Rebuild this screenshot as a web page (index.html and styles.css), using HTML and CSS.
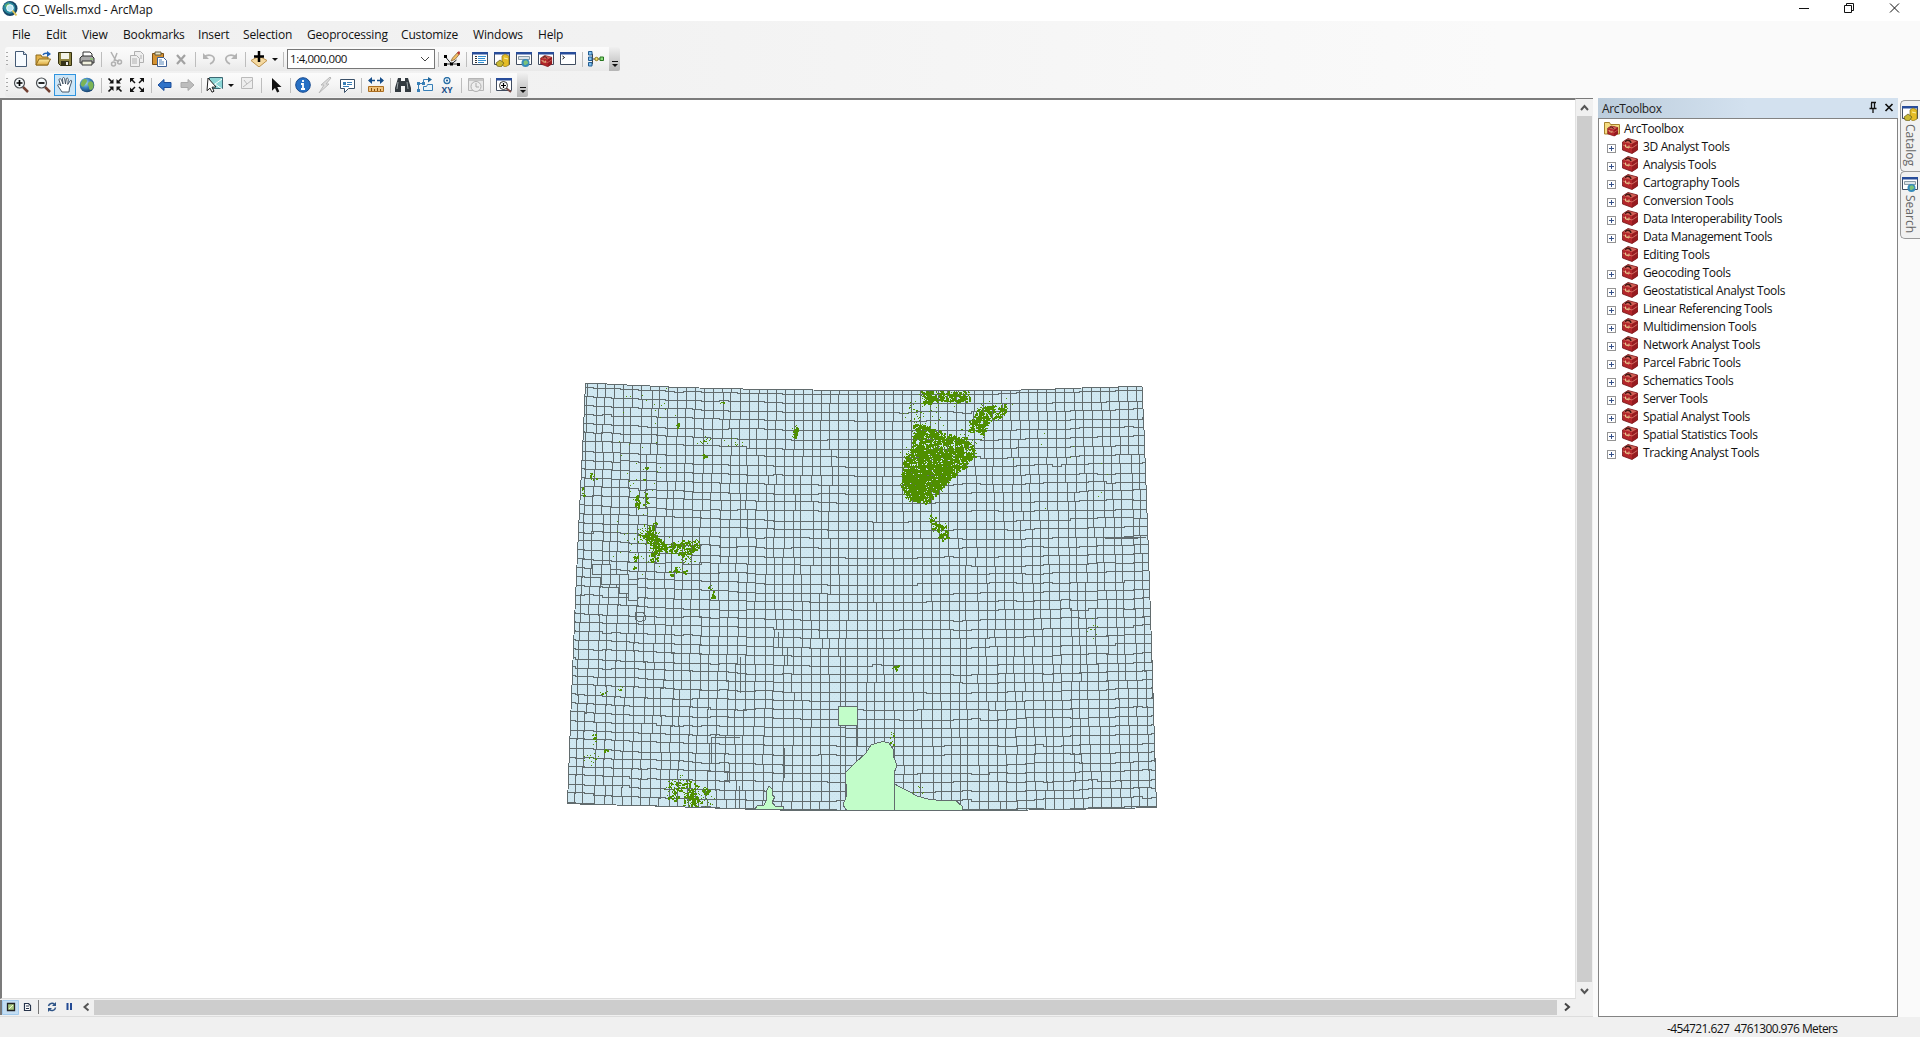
FILE: index.html
```html
<!DOCTYPE html>
<html lang="en">
<head>
<meta charset="utf-8">
<title>CO_Wells.mxd - ArcMap</title>
<link rel="stylesheet" href="styles.css">
</head>
<body>
<svg class="defs" width="0" height="0">
<defs>
<linearGradient id="gold" x1="0" y1="0" x2="0" y2="1"><stop offset="0" stop-color="#fff0a8"/><stop offset="1" stop-color="#dba63c"/></linearGradient>
<radialGradient id="sphere" cx=".4" cy=".35" r=".7"><stop offset="0" stop-color="#a8dcf5"/><stop offset=".5" stop-color="#3c83bd"/><stop offset="1" stop-color="#123963"/></radialGradient>
<pattern id="land" width="4" height="4" patternUnits="userSpaceOnUse"><rect width="4" height="4" fill="#d0e8f1"/><path d="M0 0h1v1H0zM2 2h1v1H2z" fill="#c9e3ee"/></pattern>
<symbol id="globe" viewBox="0 0 16 16"><circle cx="8" cy="8" r="7.3" fill="url(#sphere)"/><path d="M3 4c2-3 5-2 5 0S6 7 5 9 2 9 1.500 7zM10 5c2-2 4 0 4.500 2 .5 3-1 6-3 6s-1-3-2-4-1-3 .5-4z" fill="#7cb455"/></symbol>
<symbol id="app" viewBox="0 0 16 16"><circle cx="8" cy="7.500" r="7.500" fill="#164768"/><path d="M2 4c3-4 6-3 8-2s4 4 3 7-5 5-8 3-5-5-3-8z" fill="#2b8ba0"/><path d="M3 4l4-2 1 3-3 4z" fill="#69b36a"/><circle cx="8" cy="7" r="3.300" fill="#b7e4f2" stroke="#f2fbff"/><path d="M10.500 9.500l4 5" stroke="#e0c65c" stroke-width="2"/></symbol>
<symbol id="new" viewBox="0 0 16 16"><path d="M2.500.5h8l3 3v12h-11z" fill="#f7fbff" stroke="#445a75"/><path d="M10.500.5v3h3" fill="#cfdcec" stroke="#445a75"/></symbol>
<symbol id="open" viewBox="0 0 16 16"><path d="M1 14V4h5l1 2h6v8z" fill="#e3b24b" stroke="#8e6a1d"/><path d="M1 14l3-6h11.500l-3 6z" fill="url(#gold)" stroke="#8e6a1d"/><path d="M8 4c1-2 3-2 5-1.500" fill="none" stroke="#2062b4" stroke-width="1.500"/><path d="M12 0l4 3-4 3z" fill="#2062b4"/></symbol>
<symbol id="save" viewBox="0 0 16 16"><path d="M1.500 1.500h13v13h-11l-2-2z" fill="#8d8341" stroke="#33300f"/><path d="M4 2h8v6H4z" fill="#f3f3e8"/><path d="M4 10h8v4H4z" fill="#35321a"/><path d="M9 11h2v3H9z" fill="#eee"/></symbol>
<symbol id="print" viewBox="0 0 16 16"><path d="M4 7V1h7l2 2v4" fill="#fff" stroke="#333"/><path d="M1 7l2-2h10l2 2v5H1z" fill="#a9a9a9" stroke="#333"/><path d="M3 10h10v4H3z" fill="#f1f1de" stroke="#333"/><path d="M11 8h3" stroke="#7ad353"/></symbol>
<symbol id="cut" viewBox="0 0 16 16"><g fill="none" stroke="#b1b1b1" stroke-width="1.500"><path d="M4 1l5 9M10 2L7 10M9 9l3 2"/><circle cx="12.500" cy="11" r="2"/><circle cx="6.500" cy="13" r="2"/></g></symbol>
<symbol id="copy" viewBox="0 0 16 16"><g fill="#efefef" stroke="#b0b0b0"><path d="M5.500.5h6l3 3v8h-9z"/><path d="M1.500 4.500h6l3 3v8h-9z"/><path d="M3 8h5M3 10h5M3 12h5M11 5h2M11 7h2"/></g></symbol>
<symbol id="paste" viewBox="0 0 16 16"><path d="M1.500 2.500h11v11h-11z" fill="#d59332" stroke="#7b4e13"/><path d="M4 1h6v3H4z" fill="#e9e5c7" stroke="#665b38"/><path d="M6.500 6.500h6l3 3v6h-9z" fill="#fff" stroke="#3d5f94"/><path d="M8 9h3M8 11h5M8 13h5" stroke="#5686ba"/></symbol>
<symbol id="del" viewBox="0 0 16 16"><path d="M4 4l8 9M12 4l-8 9" stroke="#a2a2a2" stroke-width="2.200"/></symbol>
<symbol id="undo" viewBox="0 0 16 16"><path d="M3 6c5-4 11-1 10 3-.5 2-2 3-4 4" fill="none" stroke="#b3b3b3" stroke-width="1.700"/><path d="M2 2v6h6z" fill="#b3b3b3"/></symbol>
<symbol id="add" viewBox="0 0 18 16"><path d="M1 9.500L9 5l8 4.500L9 16z" fill="#f5d9a0" stroke="#bd924d"/><path d="M9 0v11M4 5.500h10" stroke="#000" stroke-width="2.500"/></symbol>
<symbol id="sketch" viewBox="0 0 16 16"><path d="M1.500 6l6 7h7M1.500 13h6l5-4" fill="none" stroke="#222"/><path d="M0 4h3v3H0zM0 12h3v3H0zM6 11.500h3v3H6zM13 12h3v3h-3z" fill="#000"/><path d="M7 10l1.500-3L14 1l2 1.500-5 6z" fill="#f2bd62" stroke="#76592f" stroke-width=".7"/><path d="M13 2l2-2 1 1.500L15 4z" fill="#bb3838"/></symbol>
<symbol id="win" viewBox="0 0 16 16"><path d="M.5 2.500h15v11H.5z" fill="#fff" stroke="#414d60"/><path d="M0 1h16v2.500H0z" fill="#284d9a"/></symbol>
<symbol id="table" viewBox="0 0 16 16"><use href="#win"/><path d="M3 5.500h2M3 7.500h2M3 9.500h2M3 11.500h2" stroke="#333"/><path d="M6 5.500h8M6 7.500h7M6 9.500h8M6 11.500h6" stroke="#338ed0"/></symbol>
<symbol id="catalog" viewBox="0 0 16 16"><use href="#win"/><path d="M8 5l3-2 4 2v9l-4 2-3-2z" fill="#e5bd26" stroke="#8a741b" stroke-width=".7"/><path d="M2 12l4-3 4 3-3 4-4-1z" fill="#c9b832" stroke="#625817" stroke-width=".7"/><path d="M10 7l4 1" stroke="#fff2a1"/></symbol>
<symbol id="search" viewBox="0 0 16 16"><use href="#win"/><path d="M2.500 5.500h11v3h-11z" fill="#dde4e8" stroke="#8b9ba5"/><circle cx="9.500" cy="12" r="4" fill="#368bba"/><path d="M8 10c3-2 3 0 4 1s-2 3-3 3-2-2-1-4z" fill="#7cc379"/></symbol>
<symbol id="box" viewBox="0 0 16 16"><path d="M.5 4L6 .5l9.500 2.500v9L10 15.500.5 12z" fill="#b3262a" stroke="#701518" stroke-width=".8"/><path d="M1 4l5-3 9 2.300L10 6z" fill="#cf5f55"/><path d="M10 6l5.500-3v9L10 15.500z" fill="#961b1f"/><path d="M.8 7l9.200 3 5.300-3.500" fill="none" stroke="#e08072" stroke-width=".8"/><path d="M3.500 4C3.500 1.500 8.500 1.500 9 5" fill="none" stroke="#3d1712" stroke-width="1.300"/><path d="M3.500 6.500v2.500l3.500 1V7.500" fill="none" stroke="#e4c98a"/></symbol>
<symbol id="toolbox" viewBox="0 0 16 16"><use href="#win"/><use href="#box" x="2" y="4" width="12.500" height="12"/></symbol>
<symbol id="python" viewBox="0 0 16 16"><use href="#win"/><path d="M2.500 5l2 1.500-2 1.500" fill="none" stroke="#111"/></symbol>
<symbol id="model" viewBox="0 0 16 16"><path d="M3 3h1.500v10H3M4.500 8H15" fill="none" stroke="#444"/><g stroke="#235c91" fill="#7fc0f0"><path d="M.5.500h3.500v3.500H.5zM.5 6h3.500v3.500H.5zM.5 11.500h3.500V15H.5z"/><circle cx="8.500" cy="8" r="1.700" fill="#f0e36c" stroke="#91761f"/><path d="M12 6h3.500v3.500H12z" fill="#8ddc7d" stroke="#26751f"/></g></symbol>
<symbol id="zin" viewBox="0 0 16 16"><path d="M10 10l5 5" stroke="#713f31" stroke-width="2.500"/><circle cx="6.500" cy="6" r="5" fill="#f5fafc" stroke="#4a4e52" stroke-width="1.200"/><path d="M6.500 3v6M3.500 6h6" stroke="#000" stroke-width="1.700"/></symbol>
<symbol id="zout" viewBox="0 0 16 16"><path d="M10 10l5 5" stroke="#713f31" stroke-width="2.500"/><circle cx="6.500" cy="6" r="5" fill="#f5fafc" stroke="#4a4e52" stroke-width="1.200"/><path d="M3.500 6h6" stroke="#000" stroke-width="1.700"/></symbol>
<symbol id="hand" viewBox="0 0 16 16"><path d="M5 15L1 9c-1-2 1-2 2-1l1 1-2-6c0-2 2-1.500 2.500 0L6 7 5.500 2c0-2 2-2 2.200 0L8.500 7l.8-5c.4-1.500 2-1 2 .5l-.6 5L13 4c1-1.500 2-.5 1.500 1l-2 6-.5 4z" fill="#fff" stroke="#38485a" stroke-width=".9"/></symbol>
<symbol id="shrink" viewBox="0 0 16 16"><path d="M1.500 1.500l4 4M14.500 1.500l-4 4M1.500 14.500l4-4M14.500 14.500l-4-4" stroke="#111" stroke-width="1.700"/><path d="M6.500 2v4.500H2zM9.500 2v4.500H14zM6.500 14V9.500H2zM9.500 14V9.500H14z" fill="#111"/></symbol>
<symbol id="grow" viewBox="0 0 16 16"><path d="M2 2l4 4M14 2l-4 4M2 14l4-4M14 14l-4-4" stroke="#111" stroke-width="1.500"/><path d="M1 5.500V1h4.500zM15 5.500V1h-4.500zM1 10.500V15h4.500zM15 10.500V15h-4.500z" fill="#111"/></symbol>
<symbol id="back" viewBox="0 0 16 16"><path d="M1 8l6-5.500V5.500h7v5H7v3z" fill="#2f72c8" stroke="#1b4c99"/></symbol>
<symbol id="fwd" viewBox="0 0 16 16"><path d="M15 8L9 2.500V5.500H2v5h7v3z" fill="#bdbdbd" stroke="#aaa"/></symbol>
<symbol id="select" viewBox="0 0 18 16"><path d="M3.500.5h13v11h-13z" fill="#8bd5d5" stroke="#3c6873"/><path d="M4 10l5-3 7 5M9 7l7-5" stroke="#fff" fill="none"/><path d="M2 1l8 9-4 .2 2 4-2 1-2-4-3 2.500z" fill="#fff" stroke="#222"/></symbol>
<symbol id="clear" viewBox="0 0 16 16"><path d="M2.500.5h11v11h-11zM5 3l3 4-4 3M8 7l5-4" fill="#eee" stroke="#bababa"/></symbol>
<symbol id="pointer" viewBox="0 0 16 16"><path d="M4 1l9.500 9H9.300l2 4.400-2.200 1L7 10.900 4 13.800z" fill="#111"/></symbol>
<symbol id="info" viewBox="0 0 16 16"><circle cx="8" cy="8" r="7.300" fill="#2770c4" stroke="#184a8f"/><path d="M8 3v2M6 7h2v5M6 12h4" fill="none" stroke="#fff" stroke-width="1.800"/></symbol>
<symbol id="bolt" viewBox="0 0 16 16"><path d="M13 0L4 8h3l-5 8 10-9H9l5-6z" fill="#ddd" stroke="#b9b9b9"/></symbol>
<symbol id="popup" viewBox="0 0 16 16"><path d="M1.500 2.500h14v9h-6l-4 4v-4h-4z" fill="#fff" stroke="#3a5068"/><path d="M4 5h3v3H4z" fill="#397eb6"/><path d="M8 5.500h5M8 7.500h5M4 9.500h6" stroke="#397eb6"/></symbol>
<symbol id="measure" viewBox="0 0 16 16"><path d="M1 3.500h14" stroke="#174e8a" stroke-width="1.500"/><path d="M0 3.500L4 0v7zM16 3.500L12 0v7z" fill="#174e8a"/><path d="M7 2h2v3H7z" fill="#fff"/><path d="M.5 9.500h15v5H.5z" fill="#f0c27b" stroke="#ad6f22"/><path d="M3.500 11v3M6.500 12v2M9.500 11v3M12.500 12v2" stroke="#865011"/></symbol>
<symbol id="find" viewBox="0 0 16 16"><path d="M3 1h3v3h4V1h3l3 10v4h-6V9H6v6H0v-4z" fill="#333a40"/><path d="M3 5l-1 7M12 5l1 7" stroke="#9ba4a7"/></symbol>
<symbol id="route" viewBox="0 0 16 16"><path d="M1.500 13.500v-7h5v-4h6" fill="none" stroke="#377eb6"/><path d="M11 0l4 2.500-4 3z" fill="#216699"/><path d="M0 5h3v3H0zM0 12h3v3H0zM5 5h3v3H5z" fill="#377eb6"/><path d="M6.500 9.500h3l1-2h5v6h-9z" fill="#eaf5fa" stroke="#377eb6"/></symbol>
<symbol id="xy" viewBox="0 0 16 16"><circle cx="8" cy="3.500" r="3" fill="#eaf5fa" stroke="#286da5" stroke-width="1.300"/><circle cx="8" cy="3.500" r="1" fill="#174e8a"/><text x="8" y="16" text-anchor="middle" class="xy-label">XY</text></symbol>
<symbol id="time" viewBox="0 0 16 16"><path d="M.5 1.500h15v12H.5z" fill="#e9e9e9" stroke="#b5b5b5"/><path d="M1 3h14" stroke="#c7c7c7" stroke-width="2"/><circle cx="8" cy="9.500" r="5" fill="#eee" stroke="#b0b0b0"/><path d="M8 6v4h3" fill="none" stroke="#aaa"/></symbol>
<symbol id="viewer" viewBox="0 0 16 16"><use href="#win"/><path d="M10 11l5 4" stroke="#7c4b46" stroke-width="2"/><circle cx="7.500" cy="8.500" r="4" fill="#fff" stroke="#333"/><path d="M7.500 6v5M5 8.500h5" stroke="#000" stroke-width="1.200"/></symbol>
<symbol id="folderbox" viewBox="0 0 16 16"><path d="M.5 13V1.500h5l1 2h9V13z" fill="#f5dc82" stroke="#a6812d"/><use href="#box" x="3" y="4.500" width="11.500" height="11"/></symbol>
</defs>
</svg>

<header class="titlebar">
  <svg class="app-icon"><use href="#app"/></svg>
  <span class="title">CO_Wells.mxd - ArcMap</span>
  <svg class="winbtns" width="130" height="21" viewBox="0 0 130 21"><path d="M9 8.500h10M54.500 5.500h7v7h-7zM56.500 5v-1.500h7v7H62M100 3.500l9 9M109 3.500l-9 9" fill="none" stroke="#111"/></svg>
</header>

<section class="chrome">
  <nav class="menu"><span>File</span><span>Edit</span><span>View</span><span>Bookmarks</span><span>Insert</span><span>Selection</span><span>Geoprocessing</span><span>Customize</span><span>Windows</span><span>Help</span></nav>
  <div class="toolbar main">
    <i class="grip"></i>
    <b><svg><use href="#new"/></svg></b><b><svg><use href="#open"/></svg></b><b><svg><use href="#save"/></svg></b><b><svg><use href="#print"/></svg></b><i class="sep"></i>
    <b><svg><use href="#cut"/></svg></b><b><svg><use href="#copy"/></svg></b><b><svg><use href="#paste"/></svg></b><b><svg><use href="#del"/></svg></b><i class="sep"></i>
    <b><svg><use href="#undo"/></svg></b><b><svg class="flip"><use href="#undo"/></svg></b><i class="sep"></i>
    <b><svg class="wide"><use href="#add"/></svg></b><i class="caret"></i><i class="sep"></i>
    <div class="combo"><span>1:4,000,000</span><svg class="chev" viewBox="0 0 10 6"><path d="M1 1l4 4 4-4" fill="none" stroke="#444"/></svg></div><i class="sep"></i>
    <b><svg><use href="#sketch"/></svg></b><i class="sep"></i>
    <b><svg><use href="#table"/></svg></b><b><svg><use href="#catalog"/></svg></b><b><svg><use href="#search"/></svg></b><b><svg><use href="#toolbox"/></svg></b><b><svg><use href="#python"/></svg></b><i class="sep"></i>
    <b><svg><use href="#model"/></svg></b><i class="cap"></i>
  </div>
  <div class="toolbar tools">
    <i class="grip"></i>
    <b><svg><use href="#zin"/></svg></b><b><svg><use href="#zout"/></svg></b><b class="active"><svg><use href="#hand"/></svg></b><b><svg><use href="#globe"/></svg></b><i class="sep"></i>
    <b><svg><use href="#shrink"/></svg></b><b><svg><use href="#grow"/></svg></b><i class="sep"></i>
    <b><svg><use href="#back"/></svg></b><b><svg><use href="#fwd"/></svg></b><i class="sep"></i>
    <b><svg class="wide"><use href="#select"/></svg></b><i class="caret"></i><b><svg><use href="#clear"/></svg></b><i class="sep w7"></i>
    <b><svg><use href="#pointer"/></svg></b><i class="sep w5"></i>
    <b><svg><use href="#info"/></svg></b><b><svg><use href="#bolt"/></svg></b><b><svg><use href="#popup"/></svg></b><i class="sep w7"></i>
    <b><svg><use href="#measure"/></svg></b><i class="sep w5"></i>
    <b><svg><use href="#find"/></svg></b><b><svg><use href="#route"/></svg></b><b><svg><use href="#xy"/></svg></b><i class="sep w7"></i>
    <b><svg><use href="#time"/></svg></b><i class="sep"></i>
    <b><svg><use href="#viewer"/></svg></b><i class="cap"></i>
  </div>
</section>

<main class="work">
  <section class="mapwin">
    <div class="canvas"><svg id="map" width="1573" height="898" viewBox="2 100 1573 898" shape-rendering="crispEdges"></svg></div>
    <div class="vscroll"><svg viewBox="0 0 15 17"><path d="M4 11l3.500-4 3.500 4" fill="none" stroke="#555" stroke-width="2"/></svg><div class="thumb"></div><svg viewBox="0 0 15 17"><path d="M4 7l3.500 4 3.500-4" fill="none" stroke="#555" stroke-width="2"/></svg></div>
    <div class="hscroll">
      <svg width="94" height="15" viewBox="0 0 94 15"><path d="M0 0h2v15H0z" fill="#7a7a7a"/><path d="M2.500.5h16v14h-16z" fill="#c3ddf3" stroke="#a3cbed"/><path d="M7.500 3.500h7v7h-7z" fill="#a9cb83" stroke="#222" stroke-width="1.300"/><path d="M9 9l4-4" stroke="#eff7d6"/><path d="M24.500 3.500h4l2 2v5h-6z" fill="#fff" stroke="#26334a" stroke-width="1.200"/><path d="M26 6h3M26 8.500h3" stroke="#26334a"/><path d="M38.500 0v14" stroke="#777"/><path d="M48.500 6a3.500 3.500 0 0 1 6-1.500M55.500 7.500a3.500 3.500 0 0 1-6 2" fill="none" stroke="#2d5386" stroke-width="1.500"/><path d="M56 2v4h-4zM48 12V8h4z" fill="#2d5386"/><path d="M67.500 3v7M71 3v7" stroke="#234a94" stroke-width="2"/><path d="M88.500 3.500l-4 3.500 4 3.500" fill="none" stroke="#555" stroke-width="2"/></svg>
      <div class="thumb"></div>
      <svg width="35" height="15" viewBox="0 0 35 15"><path d="M8 3.500L12 7l-4 3.500" fill="none" stroke="#444" stroke-width="2"/></svg>
    </div>
  </section>
  <aside class="panel">
    <div class="panel-head"><span>ArcToolbox</span><svg width="44" height="20" viewBox="0 0 44 20"><path d="M17 4.500h5M17.500 5v5M20.500 5v5M15.500 10.500h7M19 11v4" fill="none" stroke="#111" stroke-width="1.300"/><path d="M31.500 6l7 7M38.500 6l-7 7" stroke="#111" stroke-width="1.700"/></svg></div>
    <div class="tree">
      <div class="root"><svg><use href="#folderbox"/></svg><span>ArcToolbox</span></div>
      <div class="node"><i class="plus"></i><svg><use href="#box"/></svg><span>3D Analyst Tools</span></div>
      <div class="node"><i class="plus"></i><svg><use href="#box"/></svg><span>Analysis Tools</span></div>
      <div class="node"><i class="plus"></i><svg><use href="#box"/></svg><span>Cartography Tools</span></div>
      <div class="node"><i class="plus"></i><svg><use href="#box"/></svg><span>Conversion Tools</span></div>
      <div class="node"><i class="plus"></i><svg><use href="#box"/></svg><span>Data Interoperability Tools</span></div>
      <div class="node"><i class="plus"></i><svg><use href="#box"/></svg><span>Data Management Tools</span></div>
      <div class="node leaf"><i class="plus"></i><svg><use href="#box"/></svg><span>Editing Tools</span></div>
      <div class="node"><i class="plus"></i><svg><use href="#box"/></svg><span>Geocoding Tools</span></div>
      <div class="node"><i class="plus"></i><svg><use href="#box"/></svg><span>Geostatistical Analyst Tools</span></div>
      <div class="node"><i class="plus"></i><svg><use href="#box"/></svg><span>Linear Referencing Tools</span></div>
      <div class="node"><i class="plus"></i><svg><use href="#box"/></svg><span>Multidimension Tools</span></div>
      <div class="node"><i class="plus"></i><svg><use href="#box"/></svg><span>Network Analyst Tools</span></div>
      <div class="node"><i class="plus"></i><svg><use href="#box"/></svg><span>Parcel Fabric Tools</span></div>
      <div class="node"><i class="plus"></i><svg><use href="#box"/></svg><span>Schematics Tools</span></div>
      <div class="node"><i class="plus"></i><svg><use href="#box"/></svg><span>Server Tools</span></div>
      <div class="node"><i class="plus"></i><svg><use href="#box"/></svg><span>Spatial Analyst Tools</span></div>
      <div class="node"><i class="plus"></i><svg><use href="#box"/></svg><span>Spatial Statistics Tools</span></div>
      <div class="node"><i class="plus"></i><svg><use href="#box"/></svg><span>Tracking Analyst Tools</span></div>
    </div>
  </aside>
  <div class="tabs">
    <div class="tab cat"><svg><use href="#catalog"/></svg><span>Catalog</span></div>
    <div class="tab sea"><svg><use href="#search"/></svg><span>Search</span></div>
  </div>
</main>
<footer class="status"><span>-454721.627&nbsp; 4761300.976 Meters</span></footer>
<script src="map.js"></script>
</body>
</html>
```
FILE: styles.css
```css
* { box-sizing: border-box; }
body { margin: 0; width: 1920px; height: 1037px; overflow: hidden; background: #f0f0f0; color: #111; font: 12px/18px "Open Sans", "Noto Sans", sans-serif; letter-spacing: -0.35px; display: flex; flex-direction: column; }
.defs { position: absolute; }
svg { display: block; flex: none; }
span { white-space: nowrap; }

.titlebar { height: 21px; background: #fff; display: flex; align-items: flex-start; }
.app-icon { width: 16px; height: 16px; margin: 1px 5px 0 2px; }
.title { flex: 1; line-height: 19px; letter-spacing: -0.15px; }

.chrome { height: 77px; background: linear-gradient(90deg, #f0f0f0 0, #f2f2f2 620px, #fafafa 1500px); display: flex; flex-direction: column; }
.menu { height: 25px; padding-left: 12px; display: grid; grid-template-columns: 34px 36px 41px 75px 45px 64px 94px 72px 65px 40px; line-height: 27px; letter-spacing: -0.17px; }
.toolbar { display: flex; align-items: center; border-radius: 3px; background: linear-gradient(#fbfbfb, #f5f5f5 50%, #e9e9e9); margin-left: 5px; }
.main { height: 24px; width: 615px; margin-top: 1px; }
.tools { height: 24px; width: 523px; margin-top: 2px; }
.toolbar b { width: 22px; height: 22px; flex: none; display: flex; align-items: center; justify-content: center; }
.toolbar b svg { width: 16px; height: 16px; }
.toolbar b svg.wide { width: 18px; }
.toolbar b svg.flip { transform: scaleX(-1); }
.toolbar b.active { background: #cde6f7; border: 1px solid #2f94df; }
.grip { width: 5px; height: 15px; flex: none; background: repeating-linear-gradient(#aaa 0 1px, transparent 1px 4px) 1px 0 / 2px 100% no-repeat; }
.sep { width: 6px; height: 15px; flex: none; background: linear-gradient(#bdbdbd, #bdbdbd) 3px 0 / 1px 100% no-repeat; }
.sep.w7 { width: 7px; }
.sep.w5 { width: 5px; }
.caret { width: 10px; flex: none; display: flex; justify-content: center; }
.caret::before { content: ""; border: 3px solid transparent; border-top-color: #111; border-bottom: 0; }
.combo { width: 148px; height: 20px; margin-left: 1px; flex: none; border: 1px solid #777; background: #fff; display: flex; align-items: center; justify-content: space-between; padding: 0 4px 0 2px; font-size: 11.5px; line-height: 17px; letter-spacing: -0.42px; }
.combo span { margin-top: -2px; }
.chev { width: 10px; height: 6px; }
.cap { width: 11px; height: 24px; margin-left: 2px; flex: none; border-radius: 0 2px 2px 0; background: linear-gradient(#f0f0f0, #b5b5b5); display: flex; flex-direction: column; align-items: center; justify-content: flex-end; padding-bottom: 4px; gap: 2px; }
.cap::before { content: ""; width: 6px; height: 1px; background: #111; }
.cap::after { content: ""; border: 3px solid transparent; border-top-color: #111; border-bottom: 0; }

.work { height: 919px; display: flex; background: #fafafa; }
.mapwin { width: 1593px; display: grid; grid-template-columns: 1576px 17px; grid-template-rows: 901px 18px; background: #f0f0f0; }
.canvas { background: #fff; border-top: 2px solid #7b7b7b; border-left: 2px solid #7b7b7b; border-right: 1px solid #e2e2e2; border-bottom: 1px solid #ddd; overflow: hidden; }
.vscroll { display: flex; flex-direction: column; padding: 0 1px; border-top: 1px solid #7b7b7b; }
.vscroll svg { width: 15px; height: 17px; }
.vscroll .thumb { flex: 1; background: #cdcdcd; }
.hscroll { grid-column: 1 / 3; display: flex; border-bottom: 1px solid #ddd; padding-top: 1px; }
.hscroll .thumb { width: 1463px; height: 15px; background: #cdcdcd; }

.panel { width: 300px; margin-left: 5px; display: flex; flex-direction: column; }
.panel-head { height: 20px; background: linear-gradient(90deg, #bccddc, #d3e1ef 50%); display: flex; justify-content: space-between; padding-left: 4px; line-height: 21px; letter-spacing: -0.35px; color: #222; }
.tree { flex: 1; background: #fff; border: 1px solid #838383; padding: 1px 0 0 5px; }
.root, .node { height: 18px; display: flex; align-items: center; }
.root svg { width: 16px; height: 16px; margin-right: 4px; }
.node { padding-left: 3px; }
.node svg { width: 16px; height: 16px; margin: -2px 5px 0 6px; }
.plus { width: 9px; height: 9px; margin-top: 3px; flex: none; border: 1px solid #949494; background: linear-gradient(#34508a, #34508a) center / 5px 1px no-repeat, linear-gradient(#34508a, #34508a) center / 1px 5px no-repeat, #fff; }
.leaf .plus { visibility: hidden; }

.tabs { flex: 1; padding: 2px 0 0 2px; }
.tab { border: 1px solid #999; border-right: 0; border-radius: 5px 0 0 5px; background: #f1f1f1; color: #666; display: flex; flex-direction: column; align-items: center; padding-top: 4px; }
.tab svg { width: 16px; height: 16px; margin-right: 2px; }
.tab span { writing-mode: vertical-rl; line-height: 16px; margin: 3px 2px 0 0; letter-spacing: 0; }
.cat { height: 72px; }
.sea { height: 68px; margin-top: -1px; }

.status { height: 20px; background: #f0f0f0; padding-left: 1667px; line-height: 24px; letter-spacing: -0.6px; }
.xy-label { font: bold 8.5px "Open Sans", sans-serif; letter-spacing: 0; fill: #174e8a; }
```
FILE: map.js
```js
(function () {
  // Small seeded generator keeps the layer identical on every load.
  var seed = 20177;
  function rnd() {
    seed = (seed * 1664525 + 1013904223) % 4294967296;
    return seed / 4294967296;
  }
  function el(name, attrs, parent) {
    var e = document.createElementNS('http://www.w3.org/2000/svg', name);
    for (var k in attrs) e.setAttribute(k, attrs[k]);
    parent.appendChild(e);
    return e;
  }
  var map = document.getElementById('map');
  var GRID = '#626c6e', WELL = '#4f8f00', BARE = '#c2fdc9';

  function topY(x) {
    var t = (x - 880) / 295;
    return 390.3 - (x < 880 ? 7 : 4.8) * t * t;
  }
  var state = '585.5,383.5 600,383.5 614,384.5 640,385.5 678,387.5 720,388.5 765,389.5 860,390.5 1000,390.5 1042,389.5 1095,387.5 1142,386.5 1144,430 1148,540 1152,660 1156.500,807.500 1115,808.500 1000,810.500 800,810.500 760,809.500 700,807.500 640,805.500 592,804.500 567.5,803.500 571,710 575,610 579,520 583,440';
  var clip = el('clipPath', { id: 'outline' }, el('defs', {}, map));
  el('polygon', { points: state }, clip);
  el('polygon', { points: state, fill: 'url(#land)' }, map);
  var g = el('g', { 'clip-path': 'url(#outline)' }, map);

  // Township rows and ranges, stepped where survey lines are offset.
  var d = '', k, r, x, y;
  var rows = [];
  for (r = 0; r < 48; r++) {
    var line = {}, jog = 0;
    for (k = -34; k <= 34; k++) {
      var edge = Math.abs(k) > 9 ? 0.4 : 0.1;
      if (rnd() < edge * 0.6) jog = Math.round(rnd() * 2 - 1) * 0.8;
      line[k] = Math.round(topY(863 + k * 9) + 4 + r * 9.03 + jog);
    }
    rows.push(line);
    d += 'M' + (863 - 34 * 9) + ' ' + (line[-34] + 0.5);
    for (k = -33; k <= 34; k++) d += 'H' + (863 + k * 9 + 0.5) + 'V' + (line[k] + 0.5);
  }
  for (k = -33; k <= 33; k++) {
    var drift = 0;
    d += 'M' + (866 + k * 9 + 0.5) + ' 380';
    for (r = 0; r < 48; r++) {
      if (rnd() < (k < -2 ? 0.22 : k < 12 ? 0.06 : 0.18)) drift = Math.round(rnd() * 4 - 2) * (rnd() < 0.5 ? 1 : 0.5);
      x = Math.round(866 + k * 9 + k * (r * 0.009) + drift);
      d += 'H' + (x + 0.5) + 'V' + (rows[r][k] + 0.5);
    }
  }
  el('path', { d: d, fill: 'none', stroke: GRID }, g);
  el('path', { d: 'M1105 538.500l41-1M778.500 632v16M787.500 648v18M740.500 657v36M711 737.500h29M711.500 738v26M729.500 764V783M739.500 786v22M784 748v30M857.500 723v23', fill: 'none', stroke: GRID, 'stroke-width': 1.6 }, g);
  el('path', { d: 'M592 564h18v10h18v10h9v16h-9v-7h-9v-9h-18v-10h-9z', fill: 'url(#land)', stroke: GRID }, g);
  el('path', { d: 'M601.500 564v20M610.500 574v10M619.500 574v19M628.500 584v9M592 574h18M601 584h27M635 613l8-1 2 3v5l-6 2-4-3z', fill: 'none', stroke: GRID }, g);
  el('polygon', { points: state, fill: 'none', stroke: GRID }, map);

  [
    '838.500,706.500 857.500,706.500 857.500,725.500 838.500,725.500',
    '845,773 855,763 866,753 871,745 877,743 883,741.500 889,743 893,749 894,758 897,765 894.500,772 894.500,810.500 847,810.500 843,805 846,797 847,788 845,780',
    '894.500,784 902,788 910,792 917,796 930,799.500 947,801 955,800 962,806 963,810.500 894.500,810.500',
    '755,809 757,806 764,805 767,799 766,792 769,786 773,790 772,795 775,797 772,802 775,806 783,806 783,809.500'
  ].forEach(function (p) { el('polygon', { points: p, fill: BARE, stroke: GRID }, map); });

  // Well locations: dense fields first, then scattered points.
  var w = '';
  function dot(px, py, s) { w += 'M' + Math.round(px) + ' ' + Math.round(py) + 'h' + s + 'v' + s + 'h-' + s + 'z'; }
  function inside(px, py, p) {
    var c = false;
    for (var i = 0, j = p.length - 1; i < p.length; j = i++)
      if ((p[i][1] > py) !== (p[j][1] > py) && px < (p[j][0] - p[i][0]) * (py - p[i][1]) / (p[j][1] - p[i][1]) + p[i][0]) c = !c;
    return c;
  }
  // Wells cluster, so density varies over small blocks inside each field.
  function field(p, dens, vary) {
    var xs = p.map(function (a) { return a[0]; }), ys = p.map(function (a) { return a[1]; }), local = {};
    for (y = Math.min.apply(0, ys); y <= Math.max.apply(0, ys); y++)
      for (x = Math.min.apply(0, xs); x <= Math.max.apply(0, xs); x++) {
        var key = (x >> 2) + ':' + (y >> 2);
        if (!(key in local)) local[key] = dens + (rnd() - 0.5) * vary;
        if (inside(x + rnd() * 4 - 2, y + rnd() * 4 - 2, p) && rnd() < local[key]) dot(x, y, rnd() < 0.3 ? 2 : 1);
      }
  }
  field([[913, 424], [927, 426], [940, 432], [966, 438], [975, 450], [975, 457], [963, 468], [953, 478], [943, 488], [935, 498], [923, 503], [907, 500], [901, 487], [903, 461], [912, 446]], 0.66, 0.5);
  field([[904, 472], [936, 464], [960, 455], [945, 482], [926, 501], [906, 499]], 0.5, 0.3);
  field([[921, 391], [969, 391], [968, 400], [955, 402], [934, 401], [922, 405]], 0.62, 0.7);
  field([[968, 426], [976, 410], [988, 406], [1005, 403], [1006, 412], [989, 423], [983, 434], [970, 433]], 0.58, 0.9);
  field([[929, 514], [948, 527], [948, 541], [940, 539], [929, 522]], 0.45, 0.7);
  field([[641, 533], [655, 522], [657, 537], [670, 544], [684, 540], [699, 541], [699, 547], [686, 556], [660, 550], [655, 561], [649, 560], [652, 548]], 0.62, 0.6);
  field([[667, 781], [697, 781], [702, 807], [690, 807], [668, 800]], 0.28, 0.6);
  field([[685, 795], [695, 793], [697, 807], [688, 807]], 0.6, 0.5);
  field([[674, 566], [687, 570], [685, 574], [675, 572]], 0.6, 0.4);
  // centre x, centre y, spread x, spread y, count
  [[795, 432, 4, 10, 45], [722, 402, 3, 2, 6], [678, 425, 3, 3, 8], [704, 456, 5, 4, 12], [705, 440, 10, 8, 16], [733, 442, 12, 9, 10],
   [637, 501, 4, 10, 34], [646, 501, 4, 10, 18], [646, 468, 3, 2, 11], [644, 479, 3, 2, 10], [592, 476, 5, 6, 14], [583, 493, 3, 8, 12],
   [635, 557, 4, 3, 18], [634, 567, 2, 2, 6], [645, 535, 12, 12, 80], [686, 560, 10, 6, 22], [671, 574, 4, 4, 14], [709, 588, 6, 4, 12], [713, 596, 2, 7, 12],
   [594, 736, 3, 12, 12], [603, 693, 6, 4, 12], [606, 750, 4, 3, 8], [620, 688, 3, 5, 6], [592, 757, 10, 9, 18], [706, 791, 5, 5, 22], [708, 801, 11, 8, 18],
   [896, 667, 5, 5, 14], [891, 736, 4, 10, 12], [916, 795, 12, 14, 12], [1092, 630, 8, 16, 10], [930, 405, 26, 26, 45], [990, 408, 25, 17, 35], [968, 440, 22, 18, 38], [914, 415, 12, 12, 26],
   [925, 460, 34, 46, 50], [640, 545, 35, 40, 45], [645, 400, 50, 30, 14], [1060, 470, 100, 90, 10], [680, 785, 24, 12, 40], [640, 470, 40, 60, 20]
  ].forEach(function (c) {
    for (var i = 0; i < c[4]; i++) {
      var a = rnd() * 6.283, q = Math.sqrt(rnd()) * (0.4 + rnd() * 0.6);
      dot(c[0] + Math.cos(a) * c[2] * q, c[1] + Math.sin(a) * c[3] * q, c[2] < 6 && rnd() < 0.3 ? 2 : 1);
    }
  });
  el('path', { d: w, fill: WELL }, g);
})();
```
